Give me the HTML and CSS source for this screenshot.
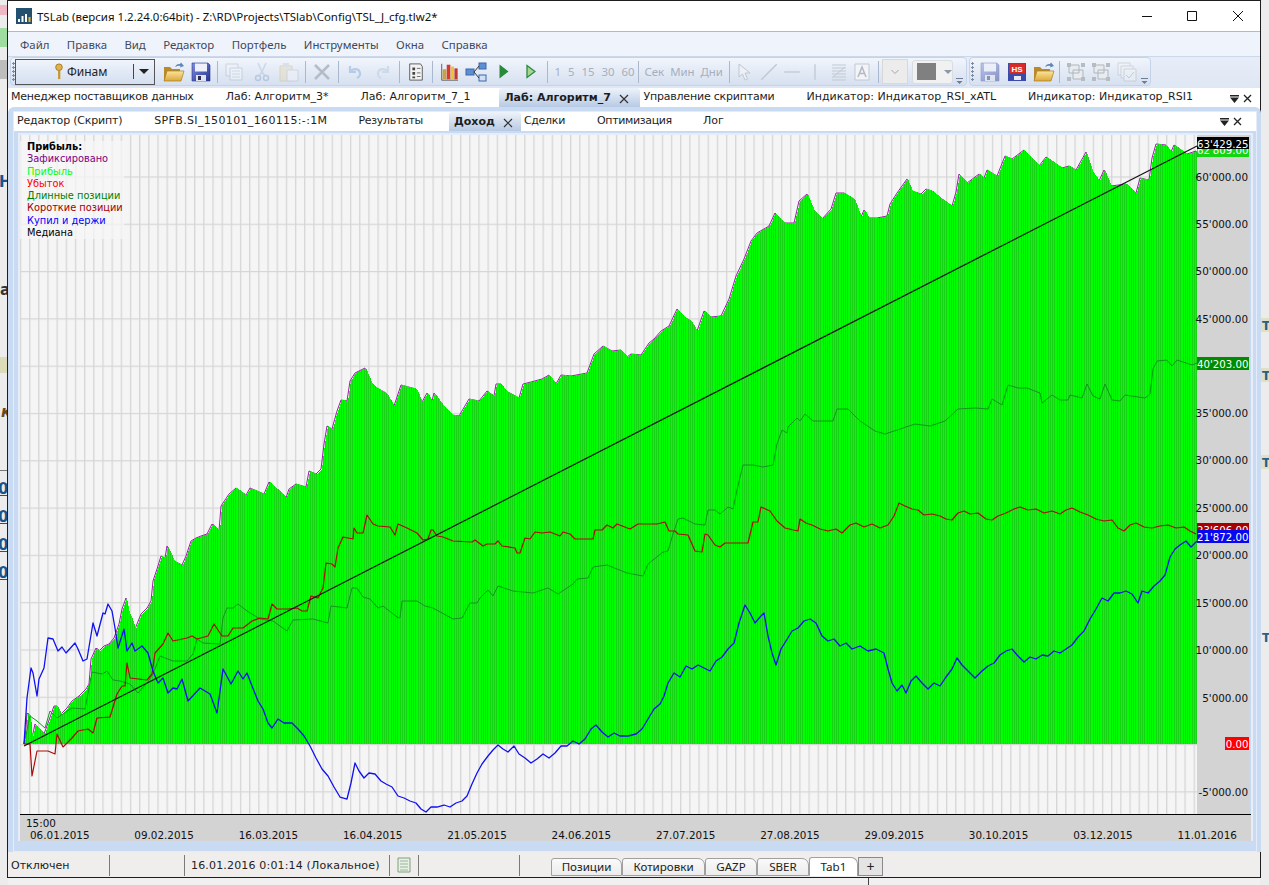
FILE: index.html
```html
<!DOCTYPE html>
<html lang="ru">
<head>
<meta charset="utf-8">
<title>TSLab</title>
<link rel="stylesheet" href="styles.css">
</head>
<body>
<svg class="defs" width="0" height="0">
  <defs>
    <linearGradient id="gFolder" x1="0" y1="0" x2="0" y2="1"><stop offset="0" stop-color="#fbe59a"/><stop offset="1" stop-color="#dca83a"/></linearGradient>
    <linearGradient id="gFloppy" x1="0" y1="0" x2="1" y2="1"><stop offset="0" stop-color="#7f8fe0"/><stop offset="1" stop-color="#26348f"/></linearGradient>
    <symbol id="folder" viewBox="0 0 22 20">
      <path d="M1 5h6l2 2h8v11H1z" fill="#b88a2c"/>
      <path d="M4 9h17l-3 10H1z" fill="url(#gFolder)" stroke="#a87c24" stroke-width=".7"/>
      <path d="M12 5c1-2.500 3-3.500 5-3l1-1.500 3 3.500-4 1.500.5-1.500c-2-.5-3.500 0-5.500 1z" fill="#5f86b4"/>
    </symbol>
    <symbol id="floppy" viewBox="0 0 20 20">
      <path d="M1 1h16l2 2v16H1z" fill="url(#gFloppy)" stroke="#2a3790" stroke-width=".6"/>
      <rect x="4" y="1.500" width="12" height="8" fill="#eef1fb"/>
      <rect x="5" y="13" width="10" height="6" fill="#dfe3f1"/>
      <rect x="7" y="14" width="3" height="4" fill="#2b2f4c"/>
    </symbol>
    <symbol id="doc" viewBox="0 0 20 20">
      <path d="M2 2h12v12H2z" fill="#f3f5f8" stroke="#aab3c2"/>
      <path d="M6 6h12v12H6z" fill="#f8f9fb" stroke="#aab3c2"/>
      <path d="M8 9h8M8 12h8M8 15h8" stroke="#b9c6da"/>
    </symbol>
    <symbol id="frame" viewBox="0 0 20 20">
      <path d="M3 3h10v8H3zM7 8h10v9H7z" fill="#e8ecef" stroke="#aeb6bc"/>
      <path d="M1 1h4v4H1zM15 1h4v4h-4zM1 15h4v4H1zM15 15h4v4h-4z" fill="#b6bdc2"/>
    </symbol>
    <symbol id="dockctl" viewBox="0 0 24 10">
      <path d="M0 1h9v1.400H0zM0 3.500h9L4.500 9z" fill="#222"/>
      <path d="M14 1l7 7M21 1l-7 7" stroke="#222" stroke-width="1.300" fill="none"/>
    </symbol>
    <symbol id="overflow" viewBox="0 0 9 26">
      <path d="M1 19h7v1H1zM1.500 22h6l-3 3z" fill="#6d7d96"/>
    </symbol>
    <polyline id="equity" points="25,743 27,727 28,712 31,715 33,737 36,723 40,728 45,733 49,722 55,705 58,705 62,713 68,707 73,700 80,695 87,688 90,683 92,658 97,647 100,650 105,645 110,643 115,637 120,623 123,608 127,597 130,612 133,618 136,628 142,613 148,607 152,600 154,580 158,568 162,555 166,557 168,545 172,553 175,560 183,564 187,555 192,540 197,537 202,535 208,533 213,523 220,530 222,505 230,493 237,487 247,494 251,487 265,493 270,481 278,488 287,497 290,488 297,483 307,486 310,470 317,473 322,468 325,443 328,425 333,428 338,410 342,399 348,400 351,380 356,372 366,367 373,383 378,387 387,392 395,405 402,384 417,388 423,401 428,392 433,400 435,392 443,403 453,414 460,415 470,398 480,400 488,390 495,395 497,383 502,383 507,390 520,397 524,383 532,381 543,378 550,374 557,383 562,374 572,375 588,372 595,353 604,345 613,350 622,349 628,356 632,353 642,354 650,342 655,338 662,330 670,325 678,308 685,316 692,320 698,330 705,310 712,316 722,315 730,298 737,275 745,258 752,240 758,232 770,225 776,212 785,222 795,222 800,200 808,193 815,210 823,218 832,208 837,192 845,192 855,198 862,216 865,209 870,217 878,217 888,215 891,203 898,192 908,178 913,190 922,193 927,188 933,190 943,198 953,205 957,191 960,173 968,182 980,173 985,177 988,169 998,175 1006,155 1013,158 1025,149 1040,165 1047,156 1063,167 1070,165 1077,169 1087,151 1093,170 1100,180 1105,169 1112,185 1127,183 1137,192 1141,177 1150,179 1153,157 1157,143 1167,144 1172,151 1175,144 1188,153 1197,150 1197,743"/>
    <pattern id="pBars" patternUnits="userSpaceOnUse" width="9" height="10" x="24">
      <rect class="bar-bright" x="1" width="1" height="10"/>
      <rect class="bar-bright" x="3" width="1" height="10"/>
      <rect class="bar-bright" x="5" width="2" height="10"/>
      <rect class="bar-bright" x="8" width="1" height="10"/>
    </pattern>
    <pattern id="pGridV" patternUnits="userSpaceOnUse" width="9.17" height="10" x="29">
      <rect class="grid-line" width="1.3" height="10"/>
    </pattern>
    <pattern id="pGridH" patternUnits="userSpaceOnUse" width="10" height="47.3" y="743">
      <rect class="grid-line" width="10" height="1.2"/>
    </pattern>
  </defs>
</svg>
<div class="desktop">
  <div class="bg-left">
    <span class="frag frag-pink"></span>
    <span class="frag frag-green"></span>
    <span class="frag frag-grey"></span>
    <span class="frag frag-beige"></span>
    <span class="frag frag-rule"></span>
    <span class="frag-t t-n">Н</span>
    <span class="frag-t t-a">а</span>
    <span class="frag-t t-k">к</span>
    <span class="frag-t t-0">0:</span>
    <span class="frag-t t-1">0:</span>
    <span class="frag-t t-2">0:</span>
    <span class="frag-t t-3">0:</span>
  </div>
  <div class="bg-right">
    <span class="frag frag-rbeige1"></span>
    <span class="frag frag-rbeige2"></span>
    <span class="frag frag-rbeige3"></span>
    <span class="frag-t r-1">Т</span>
    <span class="frag-t r-2">Т</span>
    <span class="frag-t r-3">Т</span>
    <span class="frag-t r-4">Т</span>
  </div>
  <span class="bg-tick"></span>

  <main class="window">
    <header class="titlebar">
      <svg class="app-icon" viewBox="0 0 16 16"><rect width="16" height="16" fill="#23506f"/><path d="M2 14v-3h2v3zM5.500 14V8h2v6zM9 14V6h2v8z" fill="#fff"/><path d="M12.500 14V9h2v5z" fill="#f0b429"/></svg>
      <span class="title-text">TSLab (версия 1.2.24.0:64bit) - Z:\RD\Projects\TSlab\Config\TSL_J_cfg.tlw2*</span>
      <div class="winbtns">
        <svg class="winbtn" viewBox="0 0 46 12"><path d="M20 6.500h10" stroke="#111"/></svg>
        <svg class="winbtn" viewBox="0 0 46 12"><path d="M19.500 1.500h9v9h-9z" stroke="#111" fill="none"/></svg>
        <svg class="winbtn" viewBox="0 0 46 12"><path d="M19 1l10 10M29 1L19 11" stroke="#111" fill="none"/></svg>
      </div>
    </header>

    <nav class="menubar">
      <span>Файл</span><span>Правка</span><span>Вид</span><span>Редактор</span><span>Портфель</span><span>Инструменты</span><span>Окна</span><span>Справка</span>
    </nav>

    <div class="toolbars">
      <div class="strip strip-one">
        <span class="grip"></span>
        <div class="provider">
          <svg class="key" viewBox="0 0 10 18"><circle cx="5" cy="4.500" r="3.500" fill="#e2b24a" stroke="#a97a1e"/><path d="M4 8h2.400v9H4z" fill="#c8962e"/></svg>
          <span class="provider-name">Финам</span>
          <span class="provider-sep"></span>
          <svg class="provider-arrow" viewBox="0 0 10 5"><path d="M0 0h10L5 5z" fill="#222"/></svg>
        </div>
        <span class="btn"><svg class="ico22" viewBox="0 0 22 20"><use href="#folder"/></svg></span>
        <span class="btn"><svg class="ico20" viewBox="0 0 20 20"><use href="#floppy"/></svg></span>
        <span class="sep"></span>
        <span class="btn dim"><svg class="ico20" viewBox="0 0 20 20"><use href="#doc"/></svg></span>
        <span class="btn dim"><svg class="ico20" viewBox="0 0 20 20"><path d="M6 1l4 9 4-9M10 10l-3 4M10 10l3 4" stroke="#a9bbd6" stroke-width="1.500" fill="none"/><circle cx="6" cy="16" r="2.500" fill="none" stroke="#8ea6cc" stroke-width="1.500"/><circle cx="14" cy="16" r="2.500" fill="none" stroke="#8ea6cc" stroke-width="1.500"/></svg></span>
        <span class="btn dim"><svg class="ico22" viewBox="0 0 22 20"><path d="M2 4h12v15H2z" fill="#e8d9b0" stroke="#c9b88e"/><rect x="5" y="1" width="6" height="4" fill="#c7ccd4"/><path d="M9 8h11v11H9z" fill="#f3f5f8" stroke="#b3bcc9"/></svg></span>
        <span class="sep"></span>
        <span class="btn"><svg class="ico18" viewBox="0 0 18 18"><path d="M2 2l14 14M16 2L2 16" stroke="#b4bcc8" stroke-width="2.500"/></svg></span>
        <span class="sep"></span>
        <span class="btn"><svg class="ico18" viewBox="0 0 18 18"><path d="M4 3v6h6M4 9c3-4 9-4 10 1 .4 2-1 4-3 5" stroke="#b8cbe6" stroke-width="2.200" fill="none"/></svg></span>
        <span class="btn"><svg class="ico18" viewBox="0 0 18 18"><path d="M14 3v6H8M14 9c-3-4-9-4-10 1-.4 2 1 4 3 5" stroke="#ced9ea" stroke-width="2.200" fill="none"/></svg></span>
        <span class="sep"></span>
        <span class="btn"><svg class="ico18" viewBox="0 0 16 20"><path d="M1 1h12l2 3v15H1z" fill="#f2f2f2" stroke="#555"/><path d="M4 5h3v3H4zM4 10h3v3H4zM4 15h3v2H4z" fill="#444"/><path d="M9 6h4M9 11h4M9 15h4" stroke="#666"/></svg></span>
        <span class="sep"></span>
        <span class="btn"><svg class="ico22" viewBox="0 0 22 22"><path d="M3 2v18h18" stroke="#555" fill="none"/><rect x="4" y="8" width="4" height="11" fill="#c9a33a"/><rect x="8.500" y="3" width="4" height="16" fill="#d63a2a"/><rect x="13" y="5" width="3.500" height="14" fill="#e9c43a"/><rect x="17" y="7" width="3.500" height="12" fill="#c0392b"/></svg></span>
        <span class="btn"><svg class="ico22" viewBox="0 0 22 20"><rect x="1" y="7" width="8" height="6" fill="#5a8fd6" stroke="#3b69a8"/><rect x="14" y="1" width="7" height="6" fill="#5a8fd6" stroke="#3b69a8"/><rect x="14" y="13" width="7" height="6" fill="#cfe0f5" stroke="#3b69a8"/><path d="M9 10l5-6M9 10l5 6" stroke="#333"/></svg></span>
        <span class="btn"><svg class="ico-play" viewBox="0 0 10 14"><path d="M.5 0l9 7-9 7z" fill="#258b3b"/></svg></span>
        <span class="btn"><svg class="ico-play" viewBox="0 0 10 14"><path d="M1 1l8 6-8 6z" fill="#a6d68f" stroke="#2b8a3e" stroke-width="1.300"/></svg></span>
        <span class="sep"></span>
        <span class="tf tf-nums"><span>1</span><span>5</span><span>15</span><span>30</span><span>60</span></span>
        <span class="sep sep-flush"></span>
        <span class="tf tf-units"><span>Сек</span><span>Мин</span><span>Дни</span></span>
        <span class="sep sep-flush"></span>
        <span class="btn-s btn-first"><svg class="ico18" viewBox="0 0 14 18"><path d="M1 1v13l3.500-3 2.500 6 2.500-1-2.500-6h5z" fill="#eef1f6" stroke="#c0c7d2"/></svg></span>
        <span class="btn-s"><svg class="ico18" viewBox="0 0 14 14"><path d="M1 13L13 1" stroke="#c0c7d2"/></svg></span>
        <span class="btn-s"><svg class="ico18" viewBox="0 0 14 14"><path d="M1 7h12" stroke="#c0c7d2"/></svg></span>
        <span class="btn-s"><svg class="ico18" viewBox="0 0 14 14"><path d="M7 1v12" stroke="#c0c7d2"/></svg></span>
        <span class="btn-s"><svg class="ico18" viewBox="0 0 16 18"><path d="M1 2h14M1 5h14M1 8h14M1 11h14M1 14h14M1 17h14" stroke="#c3c9d3"/><path d="M2 14L14 4" stroke="#c3c9d3"/></svg></span>
        <span class="btn-s"><svg class="ico18" viewBox="0 0 16 18"><path d="M1 1h14v16H1z" fill="#f2f4f7" stroke="#c3c9d3"/><path d="M4 14l4-10 4 10M5.500 10.500h5" stroke="#b2bac6" stroke-width="1.500" fill="none"/></svg></span>
        <span class="sep sep-drop"></span>
        <span class="drop-off"><svg class="chev" viewBox="0 0 8 4"><path d="M.5 0L4 3.500 7.500 0" stroke="#a5a5a5" fill="none"/></svg></span>
        <span class="drop-color"><span class="swatch"></span><svg class="chev" viewBox="0 0 8 4"><path d="M0 0h8L4 4z" fill="#8c97a8"/></svg></span>
        <svg class="overflow" viewBox="0 0 9 26"><use href="#overflow"/></svg>
      </div>
      <div class="strip strip-two">
        <span class="grip"></span>
        <span class="btn2 dim"><svg class="ico20" viewBox="0 0 20 20"><use href="#floppy"/></svg></span>
        <span class="btn2"><svg class="ico20" viewBox="0 0 20 20"><path d="M1 1h18v18H1z" fill="#3a4aa8"/><rect x="2" y="1.500" width="16" height="10" fill="#d62b2b"/><text class="hs" x="10" y="9.500">HS</text><rect x="7" y="14" width="7" height="4" fill="#e8e8ee"/></svg></span>
        <span class="btn2"><svg class="ico22" viewBox="0 0 22 20"><use href="#folder"/></svg></span>
        <span class="sep sep-two"></span>
        <span class="btn3"><svg class="ico20" viewBox="0 0 20 20"><use href="#frame"/></svg></span>
        <span class="btn3"><svg class="ico20" viewBox="0 0 20 20"><use href="#frame"/></svg></span>
        <span class="btn3 dim"><svg class="ico20" viewBox="0 0 20 20"><path d="M1 1h12v12H1z" fill="#f4f6f8" stroke="#aeb6bc"/><path d="M4 4h12v12H4z" fill="#f4f6f8" stroke="#aeb6bc"/><path d="M7 7h12v12H7z" fill="#f4f6f8" stroke="#aeb6bc"/><path d="M9 13l3 3 5-6" stroke="#8fa8c6" fill="none"/></svg></span>
        <svg class="overflow" viewBox="0 0 9 26"><use href="#overflow"/></svg>
      </div>
    </div>

    <div class="docktabs">
      <span class="dtab dtab-first">Менеджер поставщиков данных</span>
      <span class="dtab dtab-wide">Лаб: Алгоритм_3*</span>
      <span class="dtab dtab-tight">Лаб: Алгоритм_7_1</span>
      <span class="dtab-active"><b>Лаб: Алгоритм_7</b><svg class="tab-x" viewBox="0 0 10 10"><path d="M1 1l8 8M9 1L1 9" stroke="#333" stroke-width="1.200"/></svg></span>
      <span class="dtab dtab-narrow">Управление скриптами</span>
      <span class="dtab dtab-wide">Индикатор: Индикатор_RSI_xATL</span>
      <span class="dtab">Индикатор: Индикатор_RSI1</span>
      <svg class="dockctl" viewBox="0 0 24 10"><use href="#dockctl"/></svg>
    </div>

    <section class="panel">
      <div class="panel-in">
        <div class="subtabs">
          <span class="stab stab-editor">Редактор (Скрипт)</span>
          <span class="stab stab-sym">SPFB.SI_150101_160115:-:1M</span>
          <span class="stab stab-res">Результаты</span>
          <span class="dtab-active stab-active"><b>Доход</b><svg class="tab-x" viewBox="0 0 10 10"><path d="M1 1l8 8M9 1L1 9" stroke="#333" stroke-width="1.200"/></svg></span>
          <span class="stab stab-deal">Сделки</span>
          <span class="stab stab-opt">Оптимизация</span>
          <span class="stab">Лог</span>
          <svg class="dockctl dockctl-sub" viewBox="0 0 24 10"><use href="#dockctl"/></svg>
        </div>
        <div class="chart">
          <svg class="plot" viewBox="20 134 1230 680">
            <rect class="plot-bg" x="20" y="134" width="1178" height="680"/>
            <rect fill="url(#pGridV)" x="20" y="134" width="1178" height="680"/>
            <rect fill="url(#pGridH)" x="20" y="134" width="1178" height="680"/>
            <use href="#equity" class="s-purple" transform="translate(-1 0)"/>
            <use href="#equity" class="s-area"/>
            <use href="#equity" class="s-bars"/>
            <polyline class="s-long" points="24,743 30,715 37,720 45,727 50,710 57,717 72,707 85,708 92,671 102,673 107,670 113,679 120,680 130,683 138,692 147,682 153,673 160,655 173,660 187,660 193,653 197,638 203,642 220,643 223,617 227,607 233,607 238,603 247,610 260,618 273,620 287,630 293,619 313,618 328,622 331,605 347,607 352,587 357,587 363,596 370,598 378,607 383,605 397,616 400,617 402,600 417,600 425,605 433,607 453,618 462,617 470,602 477,602 480,597 488,589 493,595 498,585 513,590 533,592 548,587 558,593 573,583 577,578 588,577 593,566 607,564 627,572 643,575 648,563 663,551 668,550 673,533 678,518 683,517 695,523 705,524 708,509 715,509 720,513 728,506 733,508 737,489 743,464 753,464 763,466 773,464 777,443 782,429 787,432 788,426 797,417 800,420 805,413 813,420 833,420 837,408 848,408 860,420 875,430 885,433 900,428 915,423 930,425 945,420 958,408 975,407 988,408 992,398 1002,404 1008,384 1018,387 1027,387 1040,392 1042,402 1052,394 1060,399 1068,399 1070,394 1082,397 1087,383 1093,395 1100,398 1105,383 1112,399 1120,400 1125,394 1145,397 1150,393 1153,368 1157,360 1167,359 1172,365 1177,359 1192,364 1197,362"/>
            <polyline class="s-short" points="24,743 30,743 32,775 37,750 48,750 55,753 57,733 63,746 72,737 78,730 88,728 93,732 97,717 110,716 117,693 122,685 125,685 127,662 130,677 147,679 152,673 155,652 163,643 168,632 173,640 187,637 192,635 197,638 208,635 214,623 222,635 228,635 233,627 243,627 252,620 260,617 268,618 272,603 277,608 288,608 297,607 302,610 307,610 311,595 318,597 323,587 326,562 332,563 335,566 338,547 343,536 353,538 354,527 357,532 363,532 367,514 373,523 378,525 390,526 395,534 398,523 407,527 417,532 423,539 428,538 431,529 433,529 437,535 443,536 453,540 472,541 475,539 483,545 487,543 495,543 498,540 502,545 515,547 517,552 520,552 525,537 530,538 535,531 542,532 550,531 560,535 563,531 570,533 575,538 593,538 595,529 602,529 607,524 613,527 617,523 630,528 638,523 657,523 665,521 669,530 675,530 678,533 688,534 695,550 702,551 705,533 708,534 715,544 720,546 725,542 733,542 740,542 748,542 753,521 758,521 761,506 770,510 777,520 785,527 798,530 800,518 806,522 812,524 820,528 828,530 836,528 842,532 850,524 856,522 864,526 872,523 880,527 888,524 894,515 899,502 905,505 912,508 918,509 924,514 932,513 940,515 946,518 952,519 958,512 964,510 970,513 978,512 986,518 992,519 998,515 1006,512 1014,508 1020,506 1028,509 1036,508 1044,512 1052,510 1060,513 1066,509 1072,507 1080,511 1088,514 1096,518 1104,520 1112,519 1118,527 1124,530 1130,524 1136,522 1144,526 1152,527 1160,525 1168,524 1176,527 1184,526 1190,530 1196,533"/>
            <polyline class="s-blue" points="24,743 27,697 31,667 33,672 37,695 39,678 44,667 48,637 53,638 58,650 62,646 66,652 75,642 78,648 83,660 87,658 93,622 97,635 103,612 105,613 108,603 112,610 115,627 118,647 124,628 127,650 132,642 135,650 142,645 148,652 153,670 158,682 163,677 168,692 173,687 177,688 182,678 188,700 200,687 210,693 217,712 223,668 231,683 238,670 243,678 247,672 252,685 258,700 263,708 268,722 272,727 278,718 284,722 292,722 298,728 304,735 310,745 316,757 322,768 328,775 334,786 340,796 347,798 351,782 355,762 359,770 364,777 369,772 375,773 381,780 386,783 392,786 398,795 404,797 410,800 416,802 421,808 426,811 431,806 437,806 444,804 450,806 456,802 462,800 467,795 472,783 477,772 482,763 488,755 493,749 498,744 503,748 508,751 514,745 519,753 525,757 531,762 537,758 543,753 549,757 555,752 561,745 567,745 573,740 579,743 585,738 591,728 596,724 602,731 608,736 614,732 620,735 628,735 636,733 642,728 648,718 654,708 660,703 664,695 668,682 674,672 680,676 686,665 692,668 698,664 704,667 710,670 716,660 722,656 728,648 734,642 739,622 745,604 750,612 755,622 760,616 764,612 768,635 772,652 776,664 781,648 786,640 792,630 798,627 804,620 810,618 816,622 822,635 828,640 834,638 840,645 846,642 852,648 860,645 868,650 876,648 884,652 888,668 892,682 897,690 902,684 906,692 911,680 916,675 922,682 928,688 934,682 940,685 946,676 952,668 957,657 962,664 968,670 975,677 982,670 988,665 994,662 1000,654 1006,650 1012,648 1018,655 1024,661 1030,656 1036,658 1042,654 1048,655 1054,650 1060,652 1066,648 1072,644 1078,636 1084,630 1090,618 1096,608 1102,597 1108,600 1114,592 1120,592 1126,590 1132,593 1138,602 1142,590 1148,592 1154,585 1160,580 1165,574 1170,556 1175,548 1180,544 1186,540 1191,546 1197,540"/>
            <line class="s-median" x1="24" y1="745" x2="1197" y2="145"/>
            <rect class="axis-bg" x="1197" y="134" width="53" height="680"/>
            <g class="axis-labels">
              <text x="1248" y="180">60'000.00</text>
              <text x="1248" y="227">55'000.00</text>
              <text x="1248" y="274">50'000.00</text>
              <text x="1248" y="322">45'000.00</text>
              <text x="1248" y="416">35'000.00</text>
              <text x="1248" y="463">30'000.00</text>
              <text x="1248" y="511">25'000.00</text>
              <text x="1248" y="558">20'000.00</text>
              <text x="1248" y="606">15'000.00</text>
              <text x="1248" y="653">10'000.00</text>
              <text x="1248" y="701">5'000.00</text>
              <text x="1248" y="795">-5'000.00</text>
            </g>
            <g class="axis-tags">
              <rect class="tag-lime" x="1197" y="146" width="52" height="10"/>
              <text x="1248.500" y="153">62'809.00</text>
              <rect class="tag-black" x="1197" y="136" width="52" height="12"/>
              <text x="1248.500" y="147">63'429.25</text>
              <rect class="tag-green" x="1197" y="356" width="52" height="13"/>
              <text x="1248.500" y="367">40'203.00</text>
              <rect class="tag-red" x="1197" y="522" width="52" height="10"/>
              <text x="1248.500" y="533">23'606.00</text>
              <rect class="tag-blue" x="1197" y="529" width="52" height="13"/>
              <text x="1248.500" y="540">21'872.00</text>
              <rect class="tag-zero" x="1225" y="736" width="24" height="13"/>
              <text x="1248.500" y="747">0.00</text>
            </g>
          </svg>
          <div class="legend">
            <b>Прибыль:</b>
            <span class="l-purple">Зафиксировано</span>
            <span class="l-lime">Прибыль</span>
            <span class="l-red">Убыток</span>
            <span class="l-green">Длинные позиции</span>
            <span class="l-dred">Короткие позиции</span>
            <span class="l-blue">Купил и держи</span>
            <span class="l-black">Медиана</span>
          </div>
          <div class="xaxis">
            <span class="xaxis-time">15:00</span>
            <div class="xaxis-dates">
              <span>06.01.2015</span><span>09.02.2015</span><span>16.03.2015</span><span>16.04.2015</span><span>21.05.2015</span><span>24.06.2015</span><span>27.07.2015</span><span>27.08.2015</span><span>29.09.2015</span><span>30.10.2015</span><span>03.12.2015</span><span>11.01.2016</span>
            </div>
          </div>
        </div>
      </div>
    </section>

    <footer class="statusbar">
      <span class="cell cell-a">Отключен</span>
      <span class="cell cell-b"></span>
      <span class="cell cell-c">16.01.2016 0:01:14 (Локальное)</span>
      <span class="cell cell-d"><svg class="note" viewBox="0 0 14 16"><path d="M1 1h12v14H1z" fill="#e8f2e4" stroke="#7fa07a"/><path d="M3 4h8M3 7h8M3 10h8M3 13h8" stroke="#9ab0a0"/></svg></span>
      <span class="cell cell-e"></span>
      <div class="sheet-tabs">
        <span class="sheet sheet-1">Позиции</span>
        <span class="sheet sheet-2">Котировки</span>
        <span class="sheet sheet-3">GAZP</span>
        <span class="sheet sheet-4">SBER</span>
        <span class="sheet sheet-5 sheet-active">Tab1</span>
        <span class="sheet-add">+</span>
      </div>
    </footer>
  </main>
</div>
</body>
</html>
```
FILE: styles.css
```css
* { box-sizing: border-box; }
html, body { margin: 0; padding: 0; }
body { width: 1269px; height: 885px; overflow: hidden; font-family: "Noto Sans", sans-serif; }
.defs { position: absolute; }

.desktop { position: relative; width: 1269px; height: 885px; background: #f0f0f0; overflow: hidden; }
.bg-left, .bg-right { position: absolute; top: 0; height: 885px; overflow: hidden; }
.bg-left { left: 0; width: 8px; background: #ececec; }
.bg-right { left: 1260px; width: 9px; background: #ececec; }
.frag { position: absolute; left: 0; right: 0; }
.frag-pink { top: 5px; height: 10px; background: #f0b7c4; }
.frag-green { top: 28px; height: 19px; background: #9fdc9f; }
.frag-grey { top: 60px; height: 19px; background: #bdbdbd; }
.frag-beige { top: 357px; height: 16px; background: #dcdcb8; }
.frag-rule { top: 470px; height: 1px; background: #777; }
.frag-rbeige1 { top: 318px; height: 14px; background: #e0e0c4; }
.frag-rbeige2 { top: 368px; height: 14px; background: #e0e0c4; }
.frag-rbeige3 { top: 455px; height: 14px; background: #e0e0c4; }
.frag-t { position: absolute; font: bold 15px "DejaVu Sans", sans-serif; line-height: 16px; color: #17558c; }
.t-n { left: -1px; top: 174px; }
.t-a { left: 0; top: 282px; color: #333; }
.t-k { left: 1px; top: 404px; color: #6a4a1a; font-style: italic; }
.t-0, .t-1, .t-2, .t-3 { left: -2px; text-decoration: underline; }
.t-0 { top: 481px; }
.t-1 { top: 509px; }
.t-2 { top: 537px; }
.t-3 { top: 565px; }
.r-1, .r-2, .r-3, .r-4 { left: 2px; color: #2a5f8a; font-size: 12px; }
.r-1 { top: 318px; }
.r-2 { top: 368px; }
.r-3 { top: 455px; }
.r-4 { top: 630px; }
.bg-tick { position: absolute; left: 868px; top: 878px; width: 1px; height: 7px; background: #444; }

.window {
  position: absolute; left: 7px; top: 0; width: 1254px; height: 878px;
  border: 1px solid #1e1e1e; background: #fff;
  display: flex; flex-direction: column;
}

.titlebar { height: 31px; flex: none; display: flex; align-items: center; background: #fff; padding-left: 8px; border-bottom: 1px solid #a8bad6; }
.app-icon { width: 16px; height: 16px; flex: none; }
.title-text { margin-left: 5px; font-size: 11.450px; color: #111; white-space: nowrap; }
.winbtns { margin-left: auto; display: flex; }
.winbtn { width: 46px; height: 12px; }

.menubar { height: 25px; flex: none; display: flex; align-items: center; gap: 17.400px; padding-left: 12px; font-size: 11.400px; color: #3d4a5e; background: #eff3fc; border-bottom: 1px solid #ccd8ea; }

.toolbars { height: 31px; flex: none; display: flex; align-items: flex-start; background: linear-gradient(#e7edf8, #dfe7f4); padding: 0 0 0 2px; }
.strip { height: 29px; display: flex; align-items: center; background: linear-gradient(#f1f5fc, #d6e0f0); border: 1px solid #c4d3e9; border-radius: 4px; }
.strip-one { width: 957px; padding: 0 2px 0 1px; }
.strip-two { margin-left: 2px; width: 182px; padding: 0 2px 0 1px; }
.grip { width: 3px; height: 20px; flex: none; margin-right: 2px; background: radial-gradient(circle at 1.500px 1.500px, #7d8ba0 1px, transparent 1.200px) 0 0 / 3px 4px; }
.strip-one .grip { margin-right: 0; }

.provider { width: 140px; height: 26px; flex: none; margin-right: 5px; display: flex; align-items: center; border: 1px solid #555; background: linear-gradient(#f0f4fb, #d4dff0); }
.key { width: 10px; height: 17px; margin-left: 38px; flex: none; }
.provider-name { margin-left: 3px; font-size: 12px; color: #222; width: 33px; flex: none; }
.provider-sep { width: 1px; height: 15px; background: #444; margin-left: 33px; flex: none; }
.provider-arrow { width: 10px; height: 5px; margin-left: 5px; flex: none; }

.btn { width: 27.500px; height: 24px; flex: none; display: flex; align-items: center; justify-content: center; }
.btn-s { width: 23.400px; height: 24px; flex: none; display: flex; align-items: center; justify-content: center; }
.btn-first { margin-left: 4px; }
.btn2 { width: 27px; height: 24px; flex: none; display: flex; align-items: center; justify-content: center; }
.btn3 { width: 25.500px; height: 24px; flex: none; display: flex; align-items: center; justify-content: center; }
.dim { opacity: .45; }
.ico22 { width: 22px; height: 20px; }
.ico20 { width: 20px; height: 20px; }
.ico18 { width: 18px; height: 18px; }
.ico-play { width: 10px; height: 15px; }
.sep { width: 1px; height: 22px; flex: none; background: #a9b8cf; margin: 0 2.250px; }
.sep-flush { margin: 0; }
.sep-drop { margin: 0 3px 0 4px; }
.sep-two { margin: 0 3px 0 2px; }
.tf { display: flex; flex: none; font-size: 11.400px; color: #a6afbd; }
.tf-nums { gap: 7px; margin-left: 4px; width: 83px; }
.tf-units { gap: 6px; margin-left: 6px; width: 84px; }
.drop-off { width: 26px; height: 25px; flex: none; display: flex; align-items: center; justify-content: center; background: #ececec; border: 1px solid #d8d8d8; }
.drop-color { width: 41px; height: 24px; flex: none; margin-left: 4px; display: flex; align-items: center; padding-left: 4px; gap: 8px; background: #f1f1f1; border: 1px solid #d8dde4; border-radius: 3px; }
.swatch { width: 19px; height: 17px; background: #808080; }
.chev { width: 8px; height: 4px; }
.overflow { width: 9px; height: 26px; margin-left: auto; flex: none; }
.hs { font: bold 8px "Liberation Sans", sans-serif; fill: #fff; text-anchor: middle; }

.docktabs { height: 19px; flex: none; display: flex; align-items: stretch; padding-left: 3px; background: #fff; font: 11px/18px "DejaVu Sans", sans-serif; color: #1d1d1d; white-space: nowrap; }
.dtab { margin-right: 31px; }
.dtab-first { letter-spacing: -.25px; margin-right: 32px; }
.dtab-wide { margin-right: 32px; }
.dtab-tight { margin-right: 29px; }
.dtab-narrow { letter-spacing: -.2px; margin-right: 32px; }
.dtab-active { width: 141px; flex: none; padding-left: 5px; display: flex; align-items: center; gap: 8px; margin-right: 3px; border-radius: 3px 3px 0 0; background: linear-gradient(#eef3fa, #b7cae4); }
.tab-x { width: 10px; height: 10px; flex: none; margin-top: 2px; }
.dockctl { width: 24px; height: 10px; position: absolute; left: 1222px; top: 93px; }

.panel { flex: 1; min-height: 0; padding: 5px 5px 1px 6px; background: #c9daf3; border-radius: 6px 6px 0 0; margin-right: -1px; }
.panel-in { height: 100%; display: flex; flex-direction: column; position: relative; box-shadow: 0 0 0 1px #e4ecf9; }
.subtabs { height: 19px; flex: none; display: flex; align-items: stretch; padding-left: 3px; background: #fff; font: 11px/17px "DejaVu Sans", sans-serif; color: #1d1d1d; white-space: nowrap; }
.stab { margin-right: 31px; }
.stab-editor { letter-spacing: -.2px; margin-right: 32px; }
.stab-sym { letter-spacing: .35px; }
.stab-res { letter-spacing: -.3px; margin-right: 26px; }
.stab-deal { letter-spacing: -.3px; margin-right: 32px; }
.stab-opt { letter-spacing: -.35px; }
.stab-active { width: 72px; margin-right: 3px; }
.dockctl-sub { left: 1206px; top: 5px; }

.chart { position: relative; margin: 4px 5px 12px 6px; flex: 1; min-height: 0; display: flex; flex-direction: column; box-shadow: 0 0 0 2px #e6edf9; }
.plot { width: 1230px; height: 680px; flex: none; display: block; }
.plot-bg { fill: #f5f5f5; }
.grid-line { fill: #d6d6d6; }
.bar-bright { fill: #00ff00; shape-rendering: crispEdges; }
.s-area { fill: #14d414; shape-rendering: crispEdges; }
.s-bars { fill: url(#pBars); shape-rendering: crispEdges; }
.s-purple, .s-long, .s-short, .s-blue { fill: none; stroke-linejoin: round; }
.s-purple { stroke: #9a1fa8; stroke-width: 1; }
.s-long { stroke: #0f9a1b; stroke-width: 1; }
.s-short { stroke: #b00a0a; stroke-width: 1.200; }
.s-blue { stroke: #1010f0; stroke-width: 1.300; }
.s-median { stroke: #111; stroke-width: 1.200; }
.axis-bg { fill: #d3d3d3; }
.axis-labels text { font: 10.400px "DejaVu Sans", sans-serif; text-anchor: end; fill: #111; }
.axis-tags text { font: 10.200px "DejaVu Sans", sans-serif; text-anchor: end; fill: #fff; }
.tag-lime { fill: #14d414; }
.tag-black { fill: #000; }
.tag-green { fill: #008c00; }
.tag-red { fill: #a80000; }
.tag-blue { fill: #0808f0; }
.tag-zero { fill: #ff0000; }

.legend { position: absolute; left: 0; top: 6px; width: 104px; height: 98px; padding-left: 7px; display: flex; flex-direction: column; justify-content: space-between; font: 9.800px/12px "DejaVu Sans", sans-serif; white-space: nowrap; background: rgba(245, 245, 245, .75); }
.l-purple { color: #800080; }
.l-lime { color: #00ff00; }
.l-red { color: #ff0000; }
.l-green { color: #008000; }
.l-dred { color: #a00000; }
.l-blue { color: #0000ff; }
.l-black { color: #000; }

.xaxis { flex: 1; background: #d3d3d3; border-top: 1px solid #000; margin-top: -1px; font: 10.400px/12px "DejaVu Sans", sans-serif; color: #111; padding: 2px 14px 0 6px; }
.xaxis-time { display: block; }
.xaxis-dates { display: flex; justify-content: space-between; padding-left: 4px; }

.statusbar { height: 25px; flex: none; display: flex; align-items: center; background: #f0eeec; font: 11px "DejaVu Sans", sans-serif; color: #222; position: relative; padding-top: 1px; }
.cell { height: 21px; display: flex; align-items: center; flex: none; border-right: 1px solid #7a7a7a; white-space: nowrap; }
.cell-a { width: 102px; padding-left: 3px; }
.cell-b { width: 75px; }
.cell-c { width: 205px; padding-left: 6px; letter-spacing: .17px; }
.cell-d { width: 29px; padding-left: 7px; }
.cell-e { width: 101px; }
.note { width: 14px; height: 16px; }
.sheet-tabs { display: flex; align-items: flex-end; height: 21px; margin-left: 31px; font-family: "Noto Sans", sans-serif; font-size: 11.600px; }
.sheet { height: 18px; display: flex; align-items: center; justify-content: center; border: 1px solid #a0a0a0; border-radius: 3px 7px 0 0; background: linear-gradient(#fafafa, #ececec); }
.sheet-1 { width: 71px; }
.sheet-2 { width: 83px; }
.sheet-3 { width: 52px; }
.sheet-4 { width: 52px; }
.sheet-5 { width: 49px; }
.sheet-active { height: 19px; background: #fff; border-bottom: 0; }
.sheet-add { width: 25px; height: 19px; display: flex; align-items: center; justify-content: center; border: 1px solid #8a8a8a; background: #e4e4e4; font-size: 14px; }
```
